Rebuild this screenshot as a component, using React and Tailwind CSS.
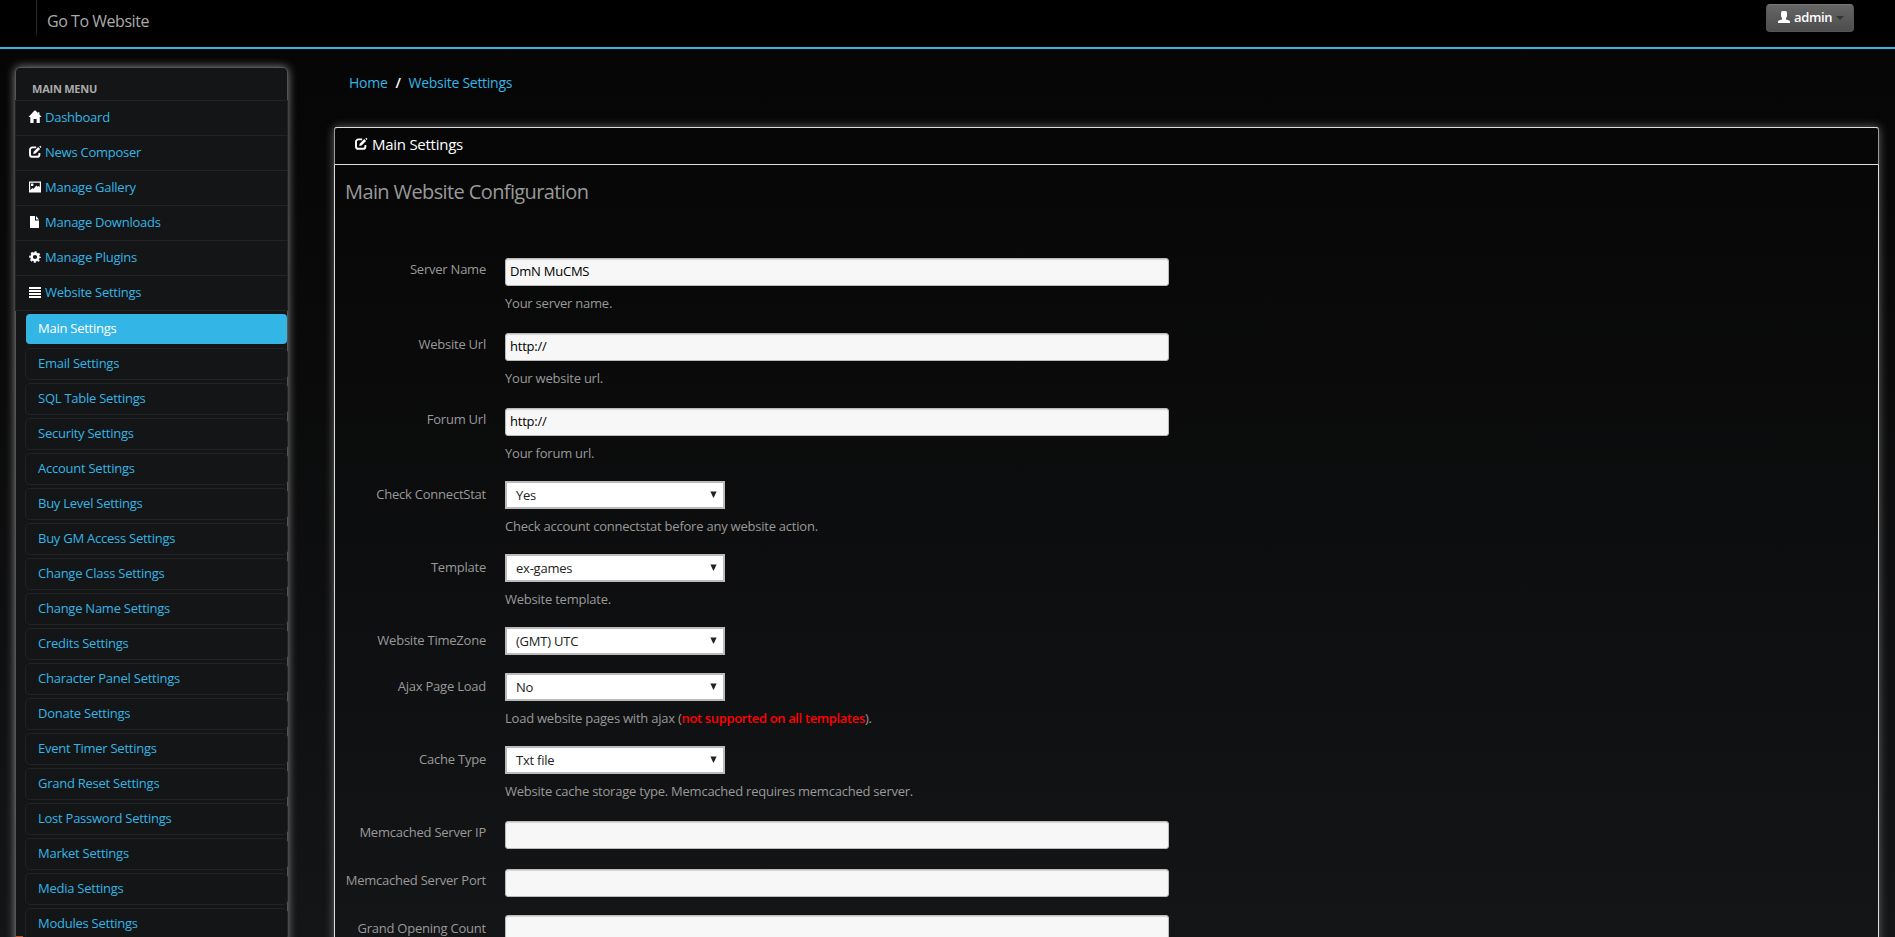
import React from "react";

function HomeIcon() {
  return (
    <svg viewBox="0 0 14 14" className="size-3.5 shrink-0 fill-white">
      <path d="M6.5 0.6h1L10 3V2.2h1.4v2.2L13.6 7H11.8v6H8.6V9H5.6v4H2.3V7H0.5z" />
    </svg>
  );
}

function EditIcon() {
  return (
    <svg viewBox="0 0 14 14" className="size-3.5 shrink-0">
      <path d="M8.2 2.4H4.4a2.4 2.4 0 0 0-2.4 2.4v4.6a2.4 2.4 0 0 0 2.4 2.4h4.6a2.4 2.4 0 0 0 2.4-2.4V8" fill="none" stroke="#fff" strokeWidth="1.9" />
      <path d="M5.2 9.1l.5-2.4 4.6-4.6 1.8 1.8-4.6 4.6z M11.3 1.6l.9-.9 1.3 1.3-.9.9z" fill="#fff" />
    </svg>
  );
}

function PictureIcon() {
  return (
    <svg viewBox="0 0 14 14" className="size-3.5 shrink-0">
      <path fillRule="evenodd" d="M1 1.5h12v11H1z M2.2 2.7v7.6l2.2-2.2 1 .9 3-3.4 1.2 1.2 1-.9 1.2 1.2V2.7z" fill="#fff" />
      <rect x="3" y="3.5" width="2.4" height="2.4" rx=".6" fill="#fff" />
    </svg>
  );
}

function FileIcon() {
  return (
    <svg viewBox="0 0 14 14" className="size-3.5 shrink-0 fill-white">
      <path d="M2 1h5v4.6h4V13H2z M8 1l3 3.6H8z" />
    </svg>
  );
}

function CogIcon() {
  return (
    <svg viewBox="0 0 14 14" className="size-3.5 shrink-0">
      <circle cx="7" cy="7" r="3.4" fill="none" stroke="#fff" strokeWidth="2.6" />
      <circle cx="7" cy="7" r="5" fill="none" stroke="#fff" strokeWidth="1.7" strokeDasharray="1.95 1.977" strokeDashoffset="0.97" />
    </svg>
  );
}

function ListIcon() {
  return (
    <svg viewBox="0 0 14 14" className="size-3.5 shrink-0 fill-white" shapeRendering="crispEdges">
      <path d="M1 2h12v2H1z M1 5h12v2H1z M1 8h12v2H1z M1 11h12v2H1z" />
    </svg>
  );
}

function UserIcon() {
  return (
    <svg viewBox="0 0 14 14" className="size-3.5 shrink-0 fill-white">
      <path d="M4 3Q4 1 5.5 1h3Q10 1 10 3v2.5Q10 7 9 8v1.4l3.2 1.1q.8.3.8 1.2V13H1v-1.3q0-.9.8-1.2L5 9.4V8Q4 7 4 5.5z" />
    </svg>
  );
}

const mainItems = [
  ["Dashboard", HomeIcon],
  ["News Composer", EditIcon],
  ["Manage Gallery", PictureIcon],
  ["Manage Downloads", FileIcon],
  ["Manage Plugins", CogIcon],
  ["Website Settings", ListIcon],
];

const subItems = [
  "Email Settings",
  "SQL Table Settings",
  "Security Settings",
  "Account Settings",
  "Buy Level Settings",
  "Buy GM Access Settings",
  "Change Class Settings",
  "Change Name Settings",
  "Credits Settings",
  "Character Panel Settings",
  "Donate Settings",
  "Event Timer Settings",
  "Grand Reset Settings",
  "Lost Password Settings",
  "Market Settings",
  "Media Settings",
  "Modules Settings",
];

function Sidebar() {
  return (
    <nav className="ml-[15px] mt-[18px] h-[900px] w-[273px] shrink-0 rounded-t-[5px] border border-[#555] bg-[#141517] shadow-[0_0_10px_#888]">
      <h2 className="h-8 pl-4 pt-3 text-[11px] leading-[18px] font-bold tracking-[-0.24px] text-[#aaa]">MAIN MENU</h2>
      <ul className="-mx-px border-t border-[#222325]">
        {mainItems.map(([label, Icon]) => (
          <li key={label} className="flex h-[35px] items-center gap-[3px] border-x border-b border-[#222325] bg-[#141517] pb-0.5 pl-3 text-[#33b5e5]">
            <Icon />
            <a className="leading-[18px]">{label}</a>
          </li>
        ))}
      </ul>
      <ul className="-mr-px flex flex-col gap-[3px] pl-[9px] pt-[3px]">
        <li className="ml-px mr-px h-[30px] rounded bg-[#33b5e5] pl-3 pt-[5px] leading-[18px] font-medium text-white">Main Settings</li>
        {subItems.map((label, i) => (
          <li key={label} className={`h-8 rounded-[5px] border border-[#222325] bg-[#141517] pl-3 pt-[5px] leading-[18px] text-[#33b5e5] ${i === 0 ? "mt-px" : ""}`}>
            {label}
          </li>
        ))}
      </ul>
    </nav>
  );
}

function Field({ label, help, type, value, height, pad }) {
  return (
    <div className={`flex tracking-[-0.23px] ${height}`}>
      <label className={`w-[141px] shrink-0 whitespace-nowrap text-right leading-[18px] ${pad}`}>{label}</label>
      <div className="ml-[19px]">
        {type === "select" ? (
          <div className="flex h-7 w-[220px] items-center justify-between border-2 border-[#bbb] bg-white pl-[9px] pr-[6px] text-[#222]">
            <span className="leading-[18px]">{value}</span>
            <svg viewBox="0 0 7 7" className="mb-px h-[7px] w-[7px] fill-[#222]">
              <path d="M0.4 0.5h6.2L3.8 6.5h-.6z" />
            </svg>
          </div>
        ) : (
          <div className="flex h-7 w-[664px] items-center rounded-[3px] border border-[#bbb] bg-[#f7f7f7] pb-0.5 pl-1 text-black shadow-[inset_0_1px_1px_#0002]">
            <span className="leading-[18px]">{value}</span>
          </div>
        )}
        {help && <p className="mt-2 leading-[18px]">{help}</p>}
      </div>
    </div>
  );
}

export default function App() {
  return (
    <div className="relative h-[937px] w-full overflow-hidden bg-linear-to-b from-[#050505] to-[#141517] font-['Open_Sans',sans-serif] text-[13px] tracking-[-0.25px] text-[#999]">
      <header className="flex h-[49px] justify-between border-b-2 border-[#33b5e5] bg-black">
        <div className="flex pl-9">
          <div className="h-[41px] w-px bg-linear-to-b from-[#2a2a2a] from-80% to-black" />
          <a className="pl-[10px] pt-2 text-[16px] leading-[26px] tracking-[-0.46px] text-[#aaa]">Go To Website</a>
        </div>
        <button className="mr-[41px] mt-1 flex h-7 w-[88px] items-center rounded border border-[#555] border-t-[#777] bg-linear-to-b from-[#666] to-[#4d4d4d] pb-0.5 pl-[10px] font-semibold tracking-[-0.35px] text-white">
          <UserIcon />
          <span className="-mt-px ml-[3px] leading-[18px]">admin</span>
          <svg viewBox="0 0 8 4" className="ml-1 mt-0.5 h-1 w-2 fill-[#333]">
            <path d="M0 0h8L4 4z" />
          </svg>
        </button>
      </header>

      <div className="flex">
        <Sidebar />
        <main className="ml-[46px] flex-1 pr-4">
          <div className="ml-[15px] mt-6 flex h-5 text-[14px] leading-5 tracking-[-0.27px] text-[#33b5e5]">
            <a>Home</a>
            <span className="w-[21px] text-center font-semibold text-white">/</span>
            <a>Website Settings</a>
          </div>
          <section className="mt-[34px] h-[900px] rounded-t-[3px] border border-[#ddd] shadow-[0_0_10px_#666]">
            <div className="-mx-px -mt-px h-[38px] rounded-t-[3px] border border-[#ddd] border-x-[#999] bg-[#060606]">
              <h2 className="flex items-center gap-1 pl-[19px] pt-[5px] text-[15px] leading-[22px] tracking-[-0.26px] text-white">
                <EditIcon />
                Main Settings
              </h2>
            </div>
            <div className="pl-[10px]">
              <h3 className="mt-[13px] h-[80px] text-[20px] leading-[27px] tracking-[-0.61px]">Main Website Configuration</h3>
              <form>
                <Field label="Server Name" value="DmN MuCMS" help="Your server name." height="h-[75px]" pad="pt-[2px]" />
                <Field label="Website Url" value="http://" help="Your website url." height="h-[75px]" pad="pt-[2px]" />
                <Field label="Forum Url" value="http://" help="Your forum url." height="h-[73px]" pad="pt-[2px]" />
                <Field type="select" label="Check ConnectStat" value="Yes" help="Check account connectstat before any website action." height="h-[73px]" pad="pt-[4px]" />
                <Field type="select" label="Template" value="ex-games" help="Website template." height="h-[73px]" pad="pt-[4px]" />
                <Field type="select" label="Website TimeZone" value="(GMT) UTC" height="h-[46px]" pad="pt-[4px]" />
                <Field
                  type="select"
                  label="Ajax Page Load"
                  value="No"
                  help={<>Load website pages with ajax (<span className="font-semibold tracking-[-0.36px] text-[#f00]">not supported on all templates</span>).</>}
                  height="h-[73px]"
                  pad="pt-[4px]"
                />
                <Field type="select" label="Cache Type" value="Txt file" help="Website cache storage type. Memcached requires memcached server." height="h-[75px]" pad="pt-[4px]" />
                <Field label="Memcached Server IP" height="h-[48px]" pad="pt-[2px]" />
                <Field label="Memcached Server Port" height="h-[46px]" pad="pt-[2px]" />
                <Field label="Grand Opening Count" height="h-[48px]" pad="pt-[4px]" />
              </form>
            </div>
          </section>
        </main>
      </div>
      <div className="absolute bottom-0 left-4 h-px w-[7px] bg-[#c2501c]" />
    </div>
  );
}
